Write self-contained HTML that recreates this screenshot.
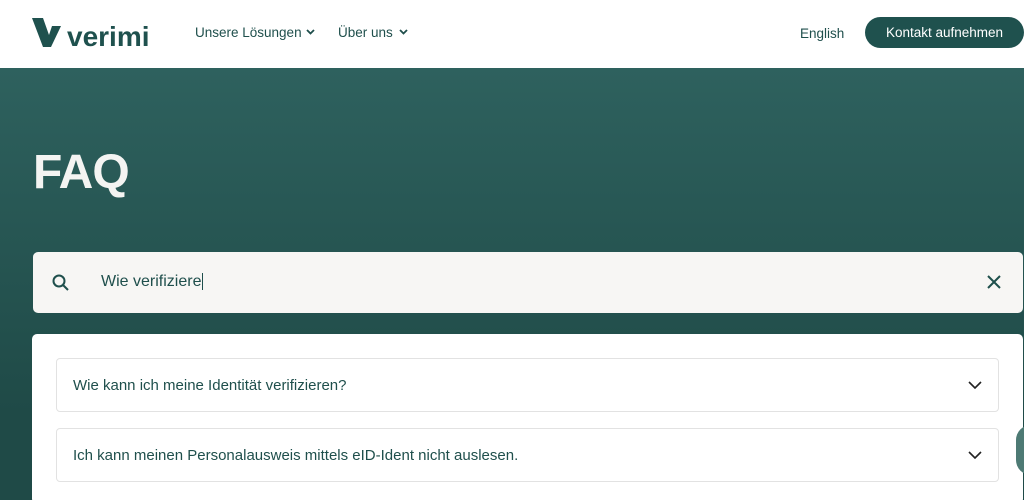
<!DOCTYPE html>
<html><head><meta charset="utf-8"><style>
*{margin:0;padding:0;box-sizing:border-box}
body{width:1024px;height:500px;overflow:hidden;font-family:"Liberation Sans",sans-serif;background:#fff;position:relative}
.hdr{height:68px;background:#fff;position:relative}
.logo{position:absolute;left:32px;top:17px}
.nav{position:absolute;top:25px;font-size:13.5px;color:#1f4f4c}
.btn{position:absolute;left:865px;top:17px;width:159px;height:31px;border-radius:16px;background:#1f514e;color:#fff;font-size:13.5px;text-align:center;line-height:31px}
.hero{position:absolute;top:68px;left:0;width:1024px;height:432px;background:linear-gradient(#2e615e,#1f4a47 80%)}
h1{position:absolute;left:33px;top:145px;color:#f4f4f2;font-size:48px;font-weight:bold;letter-spacing:-1px}
.search{position:absolute;left:33px;top:252px;width:990px;height:61px;background:#f7f6f4;border-radius:5px}
.search .t{position:absolute;left:68px;top:21px;font-size:16px;color:#1f4f4c}
.card{position:absolute;left:32px;top:334px;width:991px;height:170px;background:#fff;border-radius:5px}
.q{position:absolute;left:24px;width:943px;height:54px;border:1px solid #e2e2e2;border-radius:4px;font-size:15px;color:#1f4f4c;padding:18px 0 0 16px}
.q svg{position:absolute;right:16px;top:22px}
</style></head><body>
<div class="hdr">
<svg class="logo" width="125" height="32" viewBox="0 0 125 32"><path d="M0 1h11l6 17 3-9h9L19 30h-8z" fill="#1f514e"/><text x="35" y="29" font-family="Liberation Sans" font-weight="bold" font-size="28" fill="#1f514e">verimi</text></svg>
<div class="nav" style="left:195px">Unsere Lösungen</div>
<svg style="position:absolute;left:306px;top:29px" width="9" height="6"><path d="M1 1l3.5 3.5L8 1" stroke="#1f4f4c" stroke-width="1.8" fill="none"/></svg>
<div class="nav" style="left:338px">Über uns</div>
<svg style="position:absolute;left:399px;top:29px" width="9" height="6"><path d="M1 1l3.5 3.5L8 1" stroke="#1f4f4c" stroke-width="1.8" fill="none"/></svg>
<div class="nav" style="left:800px;top:26px">English</div>
<div class="btn">Kontakt aufnehmen</div>
</div>
<div class="hero"></div>
<h1>FAQ</h1>
<div class="search">
<svg style="position:absolute;left:18px;top:21px" width="20" height="20" viewBox="0 0 20 20"><circle cx="8" cy="8" r="5.5" stroke="#1f4f4c" stroke-width="2" fill="none"/><path d="M12 12l5 5" stroke="#1f4f4c" stroke-width="2"/></svg>
<div class="t">Wie verifiziere<span style="border-left:1px solid #1f4f4c;margin-left:1px"></span></div>
<svg style="position:absolute;left:954px;top:23px" width="14" height="14"><path d="M1 1l12 12M13 1L1 13" stroke="#1f4f4c" stroke-width="2"/></svg>
</div>
<div class="card">
<div class="q" style="top:24px">Wie kann ich meine Identität verifizieren?<svg width="14" height="8"><path d="M1 1l6 6 6-6" stroke="#222" stroke-width="1.6" fill="none"/></svg></div>
<div class="q" style="top:94px">Ich kann meinen Personalausweis mittels eID-Ident nicht auslesen.<svg width="14" height="8"><path d="M1 1l6 6 6-6" stroke="#222" stroke-width="1.6" fill="none"/></svg></div>
</div>
<div style="position:absolute;left:1016px;top:425px;width:30px;height:50px;border-radius:25px;background:#4d7a74"></div>
</body></html>
